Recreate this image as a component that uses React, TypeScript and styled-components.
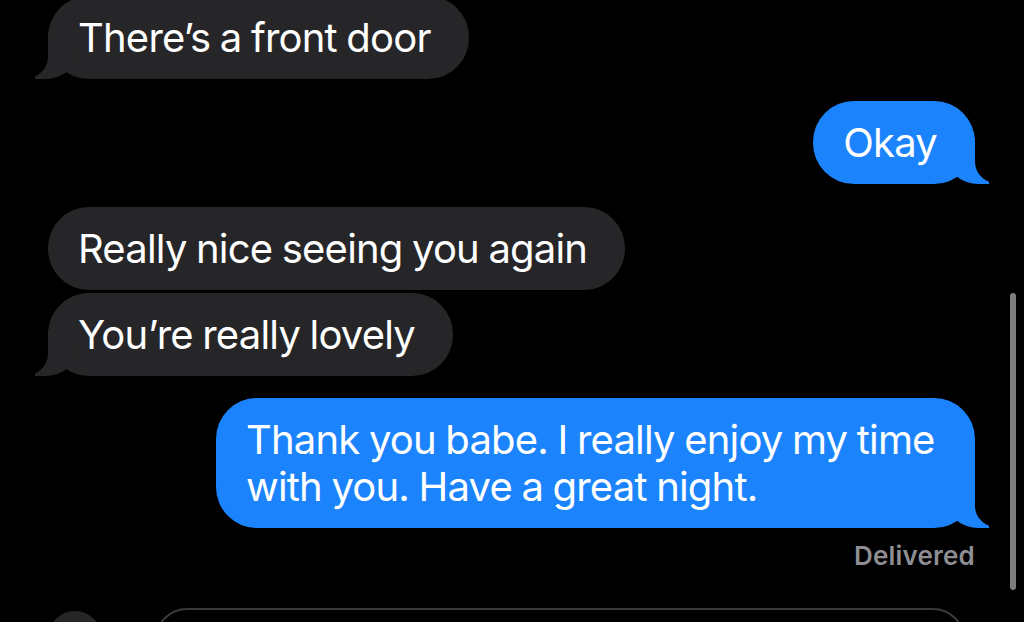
import { FC } from "react";
import styled, { createGlobalStyle, css } from "styled-components";

type Side = "them" | "me";

interface Message {
	id: number;
	side: Side;
	text: string;
	tail: boolean;
	gapBefore: number;
}

const messages: Message[] = [
	{ id: 1, side: "them", text: "There’s a front door", tail: true, gapBefore: 0 },
	{ id: 2, side: "me", text: "Okay", tail: true, gapBefore: 22 },
	{ id: 3, side: "them", text: "Really nice seeing you again", tail: false, gapBefore: 23 },
	{ id: 4, side: "them", text: "You’re really lovely", tail: true, gapBefore: 3 },
	{
		id: 5,
		side: "me",
		text: "Thank you babe. I really enjoy my time with you. Have a great night.",
		tail: true,
		gapBefore: 22,
	},
];

const GRAY = "#262628";
const BLUE = "#1b84fc";

const App: FC = () => {
	return (
		<>
			<GlobalStyle />
			<Screen>
				<Thread>
					{messages.map((message) => (
						<Row key={message.id} $side={message.side} $gap={message.gapBefore}>
							<Bubble $side={message.side} $tail={message.tail}>
								{message.text}
							</Bubble>
						</Row>
					))}
					<Status>Delivered</Status>
				</Thread>
				<Composer>
					<AppsButton />
					<InputField />
				</Composer>
				<ScrollThumb />
			</Screen>
		</>
	);
};

const GlobalStyle = createGlobalStyle`
	html, body {
		margin: 0;
		padding: 0;
		background: #000;
	}
	body {
		font-family: Inter, "Noto Sans", sans-serif;
		-webkit-font-smoothing: antialiased;
	}
`;

const Screen = styled.div`
	position: relative;
	width: 1024px;
	height: 622px;
	overflow: hidden;
	background: #000;
	display: flex;
	flex-direction: column;
`;

const Thread = styled.div`
	display: flex;
	flex-direction: column;
	padding: 0 49px 0 48px;
	margin-top: -4px;
`;

const Row = styled.div<{ $side: Side; $gap: number }>`
	display: flex;
	justify-content: ${({ $side }) => ($side === "me" ? "flex-end" : "flex-start")};
	margin-top: ${({ $gap }) => $gap}px;
`;

const tailThem = css`
	&::before {
		content: "";
		position: absolute;
		bottom: 0;
		left: -13px;
		width: 44px;
		height: 46px;
		background: ${GRAY};
		border-bottom-right-radius: 34px 30px;
	}
	&::after {
		content: "";
		position: absolute;
		bottom: 0;
		left: -44px;
		width: 44px;
		height: 46px;
		background: #000;
		border-bottom-right-radius: 24px 22px;
	}
`;

const tailMe = css`
	&::before {
		content: "";
		position: absolute;
		bottom: 0;
		right: -14px;
		width: 44px;
		height: 46px;
		background: ${BLUE};
		border-bottom-left-radius: 34px 30px;
	}
	&::after {
		content: "";
		position: absolute;
		bottom: 0;
		right: -44px;
		width: 44px;
		height: 46px;
		background: #000;
		border-bottom-left-radius: 24px 22px;
	}
`;

const Bubble = styled.div<{ $side: Side; $tail: boolean }>`
	position: relative;
	z-index: 0;
	max-width: 691px;
	padding: 18px 38px 18px 30px;
	border-radius: 41px;
	background: ${({ $side }) => ($side === "me" ? BLUE : GRAY)};
	color: #fff;
	font-size: 40px;
	line-height: 47px;
	letter-spacing: -0.8px;
	word-spacing: -1px;
	font-weight: 400;

	&::before,
	&::after {
		z-index: -1;
	}

	${({ $side, $tail }) => ($tail ? ($side === "me" ? tailMe : tailThem) : "")}
`;

const Status = styled.div`
	align-self: flex-end;
	margin-top: 13px;
	color: #8e8e93;
	font-size: 26px;
	line-height: 30px;
	font-weight: 600;
	letter-spacing: 0.2px;
`;

const Composer = styled.div`
	display: flex;
	align-items: flex-start;
	gap: 53px;
	padding: 0 59px 0 48px;
	margin-top: 37px;
`;

const AppsButton = styled.div`
	flex: none;
	width: 54px;
	height: 54px;
	margin-top: 3px;
	border-radius: 50%;
	background: #262628;
`;

const InputField = styled.div`
	flex: 1;
	height: 60px;
	border: 2px solid #3a3a3c;
	border-radius: 32px;
`;

const ScrollThumb = styled.div`
	position: absolute;
	top: 293px;
	right: 8px;
	width: 6px;
	height: 297px;
	border-radius: 3px;
	background: #7d7d7f;
`;

export default App;
